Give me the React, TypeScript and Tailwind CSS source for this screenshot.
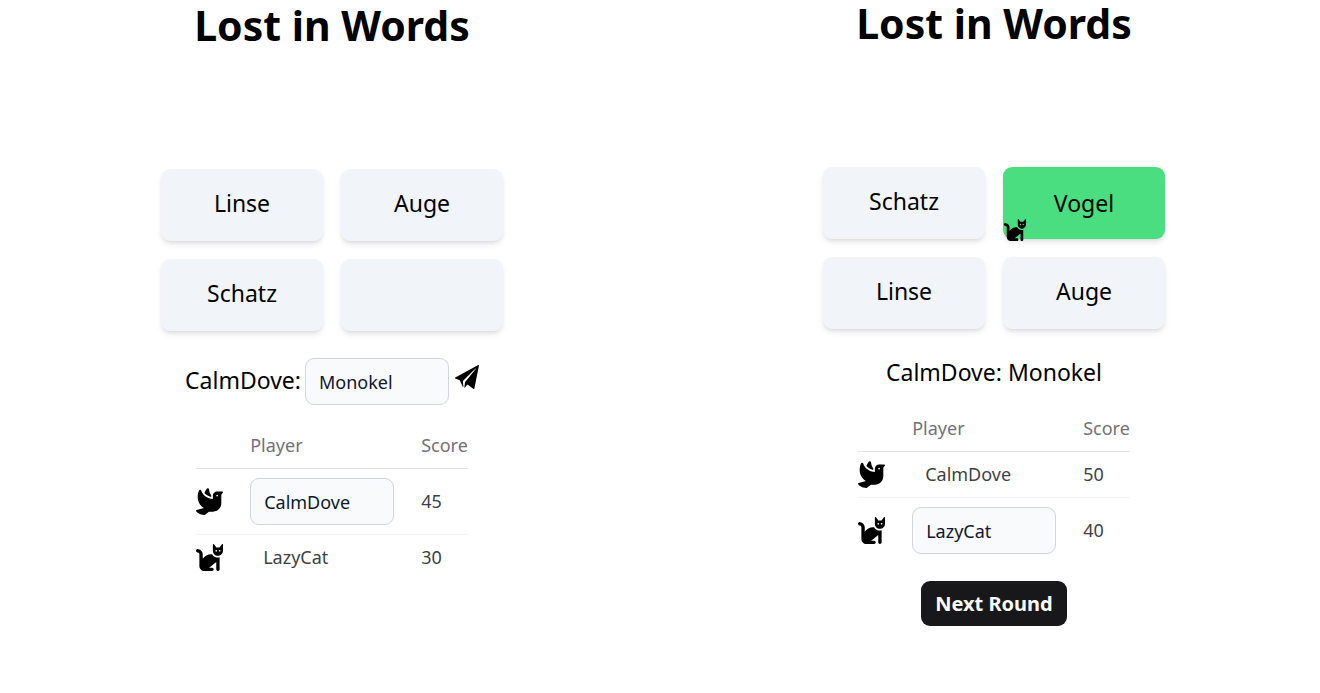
import { FaCat, FaDove } from "react-icons/fa6";
import { IoIosPaperPlane } from "react-icons/io";

type Player = { name: string; score: number; icon: "dove" | "cat"; editable?: boolean };
type Word = { text: string; guessedBy?: "dove" | "cat" };

function Avatar({ icon, className }: { icon: "dove" | "cat"; className: string }) {
  return icon === "dove" ? (
    <FaDove className={className} />
  ) : (
    <FaCat viewBox="32 0 512 512" className={className} />
  );
}

function WordGrid({ words }: { words: Word[] }) {
  return (
    <div className="grid grid-cols-[162px_162px] gap-[18px]">
      {words.map((word, i) => (
        <button
          key={i}
          type="button"
          aria-label={word.text || "Empty card"}
          className={
            word.guessedBy
              ? "relative flex h-18 items-center justify-center rounded-[9px] bg-[#4ade80] text-[23px] leading-8 shadow-md"
              : "flex h-18 items-start justify-center rounded-[9px] bg-slate-100 pt-[18px] text-[23px] leading-8 shadow-md"
          }
        >
          {word.text}
          {word.guessedBy && (
            <Avatar icon={word.guessedBy} className="absolute -bottom-0.5 left-px size-[22px]" />
          )}
        </button>
      ))}
    </div>
  );
}

const field =
  "block h-[47px] w-36 rounded-[9px] border border-gray-300 bg-slate-50 px-[13px] text-lg text-slate-900 outline-none";

function ScoreTable({ players }: { players: Player[] }) {
  return (
    <table className="mt-[27px] text-left text-lg leading-[27px] text-zinc-700">
      <thead className="border-b border-zinc-200 text-zinc-500">
        <tr>
          <th className="pr-[27px]" />
          <th className="pr-[27px] pb-[9px] font-normal">Player</th>
          <th className="pb-[9px] font-normal">Score</th>
        </tr>
      </thead>
      <tbody>
        {players.map((p) => (
          <tr key={p.name} className="border-b border-zinc-100 last:border-b-0">
            <td className="py-[9px] pr-[27px]">
              <Avatar icon={p.icon} className="block size-[27px] text-black" />
            </td>
            <td className="py-[9px] pr-[27px]">
              {p.editable ? (
                <input aria-label="Player name" defaultValue={p.name} className={field} />
              ) : (
                <div className="w-36 px-[13px]">{p.name}</div>
              )}
            </td>
            <td className="py-[9px]">{p.score}</td>
          </tr>
        ))}
      </tbody>
    </table>
  );
}

function Title() {
  return <h1 className="mb-[121px] text-[41px] leading-[46px] font-bold">Lost in Words</h1>;
}

export default function App() {
  return (
    <main className="grid min-h-screen grid-cols-2 gap-x-2.5 bg-white pl-1.5 font-['Noto_Sans',sans-serif] text-black">
      <section className="flex flex-col items-center pt-0.5">
        <Title />
        <WordGrid words={[{ text: "Linse" }, { text: "Auge" }, { text: "Schatz" }, { text: "" }]} />
        <form className="mt-[27px] flex items-baseline" onSubmit={(e) => e.preventDefault()}>
          <label htmlFor="clue" className="mr-1 text-[23px] leading-8">
            CalmDove:
          </label>
          <input id="clue" defaultValue="Monokel" className={field} />
          <button type="submit" aria-label="Send" className="ml-1.5">
            <IoIosPaperPlane viewBox="48 48 416 416" className="size-6" />
          </button>
        </form>
        <ScoreTable
          players={[
            { name: "CalmDove", score: 45, icon: "dove", editable: true },
            { name: "LazyCat", score: 30, icon: "cat" },
          ]}
        />
      </section>
      <section className="flex flex-col items-center">
        <Title />
        <WordGrid
          words={[{ text: "Schatz" }, { text: "Vogel", guessedBy: "cat" }, { text: "Linse" }, { text: "Auge" }]}
        />
        <p className="mt-[27px] text-[23px] leading-8">CalmDove: Monokel</p>
        <ScoreTable
          players={[
            { name: "CalmDove", score: 50, icon: "dove" },
            { name: "LazyCat", score: 40, icon: "cat", editable: true },
          ]}
        />
        <button
          type="button"
          className="mt-[18px] rounded-[9px] bg-zinc-900 px-3.5 py-[9px] text-xl leading-[27px] font-bold text-white"
        >
          Next Round
        </button>
      </section>
    </main>
  );
}
